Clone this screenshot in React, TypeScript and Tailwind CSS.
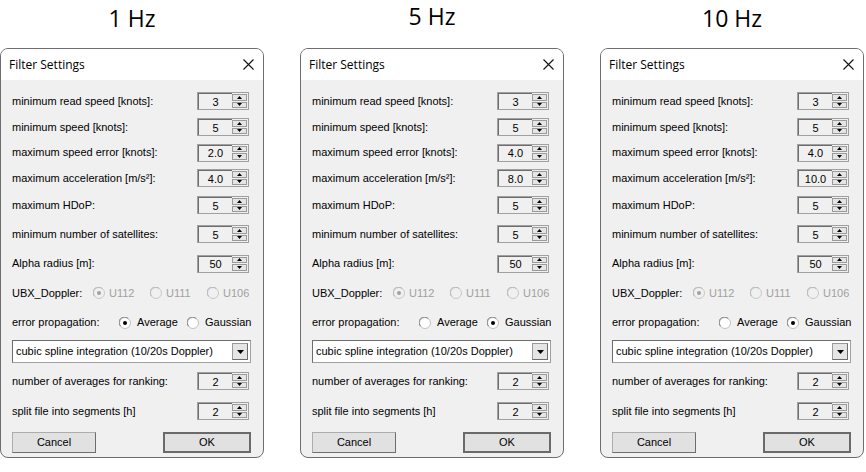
import React from 'react';

// Filter settings for each sample rate
const DIALOGS = [
  { title: '1 Hz', speedError: '2.0', accel: '4.0', gaussian: false, pad: 'pt-[2px]' },
  { title: '5 Hz', speedError: '4.0', accel: '8.0', gaussian: true, pad: 'pt-[0px]' },
  { title: '10 Hz', speedError: '4.0', accel: '10.0', gaussian: true, pad: 'pt-[2px]' }
];

const Arrow: React.FC<{ up?: boolean }> = ({ up }) => (
  <svg width="5" height="3" viewBox="0 0 5 3">
    <path d={up ? 'M0 3 L2.5 0 L5 3 Z' : 'M0 0 L2.5 3 L5 0 Z'} fill="#000" />
  </svg>
);

const SpinBox: React.FC<{ value: string }> = ({ value }) => (
  <div className="w-[52px] h-[18px] flex border border-[#a0a0a0] bg-[#f0f0f0]">
    <div className="flex-1 flex items-center justify-center border-t border-l border-[#6d6d6d] text-[11px] text-black leading-none pt-[1px]">
      {value}
    </div>
    <div className="w-[16px] flex flex-col gap-[1px] py-[1px] pr-[1px]">
      <div className="flex-1 flex items-center justify-center bg-[#e5e5e5] border border-[#9a9a9a]">
        <Arrow up />
      </div>
      <div className="flex-1 flex items-center justify-center bg-[#e5e5e5] border border-[#9a9a9a]">
        <Arrow />
      </div>
    </div>
  </div>
);

const Radio: React.FC<{ checked?: boolean; disabled?: boolean }> = ({ checked, disabled }) => (
  <svg width="12" height="12" viewBox="0 0 12 12">
    <circle cx="6" cy="6" r="5.5" fill={disabled ? '#f0f0f0' : '#fff'} stroke={disabled ? '#c8c8c8' : '#c0c0c0'} />
    <path d="M1.6 9.2 A5 5 0 0 1 9.2 1.6" fill="none" stroke={disabled ? '#b4b4b4' : '#7a7a7a'} strokeWidth="1" />
    {checked && <circle cx="6" cy="6" r="2" fill={disabled ? '#a0a0a0' : '#000'} />}
  </svg>
);

const Row: React.FC<{ label: string; h: string; children: React.ReactNode }> = ({ label, h, children }) => (
  <div className={`flex items-center justify-between pl-[11px] pr-[14px] ${h}`}>
    <span className="text-[11px] text-black">{label}</span>
    {children}
  </div>
);

const FilterDialog: React.FC<{ speedError: string; accel: string; gaussian: boolean }> = ({
  speedError,
  accel,
  gaussian
}) => (
  <div className='w-[264px] h-[410px] flex flex-col border border-[#6e6e6e] rounded-[8px] overflow-hidden bg-[#f0f0f0] font-["Liberation_Sans",Arial,sans-serif]'>
    {/* title bar */}
    <div className="h-[31px] bg-white flex items-center justify-between pl-[8px] pr-[9px]">
      <span className='text-[12px] text-black font-["Open_Sans",sans-serif]'>Filter Settings</span>
      <svg width="11" height="11" viewBox="0 0 11 11">
        <path d="M0.5 0.5 L10.5 10.5 M10.5 0.5 L0.5 10.5" stroke="#111" strokeWidth="1.1" />
      </svg>
    </div>

    <div className="flex-1 flex flex-col pt-[8px]">
      <Row label="minimum read speed [knots]:" h="h-[26px]">
        <SpinBox value="3" />
      </Row>
      <Row label="minimum speed [knots]:" h="h-[26px]">
        <SpinBox value="5" />
      </Row>
      <Row label="maximum speed error [knots]:" h="h-[25px]">
        <SpinBox value={speedError} />
      </Row>
      <Row label="maximum acceleration [m/s²]:" h="h-[26px]">
        <SpinBox value={accel} />
      </Row>
      <Row label="maximum HDoP:" h="h-[28px]">
        <SpinBox value="5" />
      </Row>
      <Row label="minimum number of satellites:" h="h-[30px]">
        <SpinBox value="5" />
      </Row>
      <Row label="Alpha radius [m]:" h="h-[29px]">
        <SpinBox value="50" />
      </Row>

      {/* UBX_Doppler, disabled */}
      <div className="h-[30px] flex items-center pl-[11px] text-[11px]">
        <span className="w-[81px] text-black">UBX_Doppler:</span>
        <div className="w-[57px] flex items-center gap-[4px] text-[#a0a0a0]">
          <Radio checked disabled />
          <span>U112</span>
        </div>
        <div className="w-[57px] flex items-center gap-[4px] text-[#a0a0a0]">
          <Radio disabled />
          <span>U111</span>
        </div>
        <div className="flex items-center gap-[4px] text-[#a0a0a0]">
          <Radio disabled />
          <span>U106</span>
        </div>
      </div>

      {/* error propagation */}
      <div className="h-[29px] flex items-center pl-[11px] text-[11px] text-black">
        <span className="w-[107px]">error propagation:</span>
        <div className="w-[68px] flex items-center gap-[6px]">
          <Radio checked={!gaussian} />
          <span>Average</span>
        </div>
        <div className="flex items-center gap-[6px]">
          <Radio checked={gaussian} />
          <span>Gaussian</span>
        </div>
      </div>

      {/* method select */}
      <div className="h-[29px] flex items-center pl-[11px] pr-[12px]">
        <div className="flex-1 h-[23px] flex items-center justify-between bg-white border border-[#a0a0a0] border-t-[#6d6d6d] border-l-[#6d6d6d]">
          <span className="pl-[3px] text-[11px] text-black">cubic spline integration (10/20s Doppler)</span>
          <div className="w-[16px] h-[17px] mr-[2px] flex items-center justify-center bg-[#e5e5e5] border border-[#9a9a9a] border-b-[#6d6d6d] border-r-[#6d6d6d]">
            <svg width="7" height="4" viewBox="0 0 7 4">
              <path d="M0 0 L3.5 4 L7 0 Z" fill="#000" />
            </svg>
          </div>
        </div>
      </div>

      <Row label="number of averages for ranking:" h="h-[30px]">
        <SpinBox value="2" />
      </Row>
      <Row label="split file into segments [h]" h="h-[30px]">
        <SpinBox value="2" />
      </Row>

      {/* buttons */}
      <div className="flex justify-between pl-[11px] pr-[12px] pt-[6px]">
        <button className="w-[84px] h-[21px] bg-[#e1e1e1] border border-[#adadad] border-b-[#6d6d6d] border-r-[#6d6d6d] text-[11px] text-black">
          Cancel
        </button>
        <button className="w-[88px] h-[21px] bg-[#e1e1e1] border-2 border-[#6a6a6a] text-[11px] text-black">
          OK
        </button>
      </div>
    </div>
  </div>
);

export default function App() {
  return (
    <div className="w-[866px] h-[472px] bg-white flex gap-[36px]">
      {DIALOGS.map(d => (
        <div key={d.title} className="w-[264px] flex flex-col">
          <div className={`h-[48px] flex justify-center text-[23px] leading-[32px] text-black font-["Open_Sans",sans-serif] ${d.pad}`}>
            {d.title}
          </div>
          <FilterDialog speedError={d.speedError} accel={d.accel} gaussian={d.gaussian} />
        </div>
      ))}
    </div>
  );
}
